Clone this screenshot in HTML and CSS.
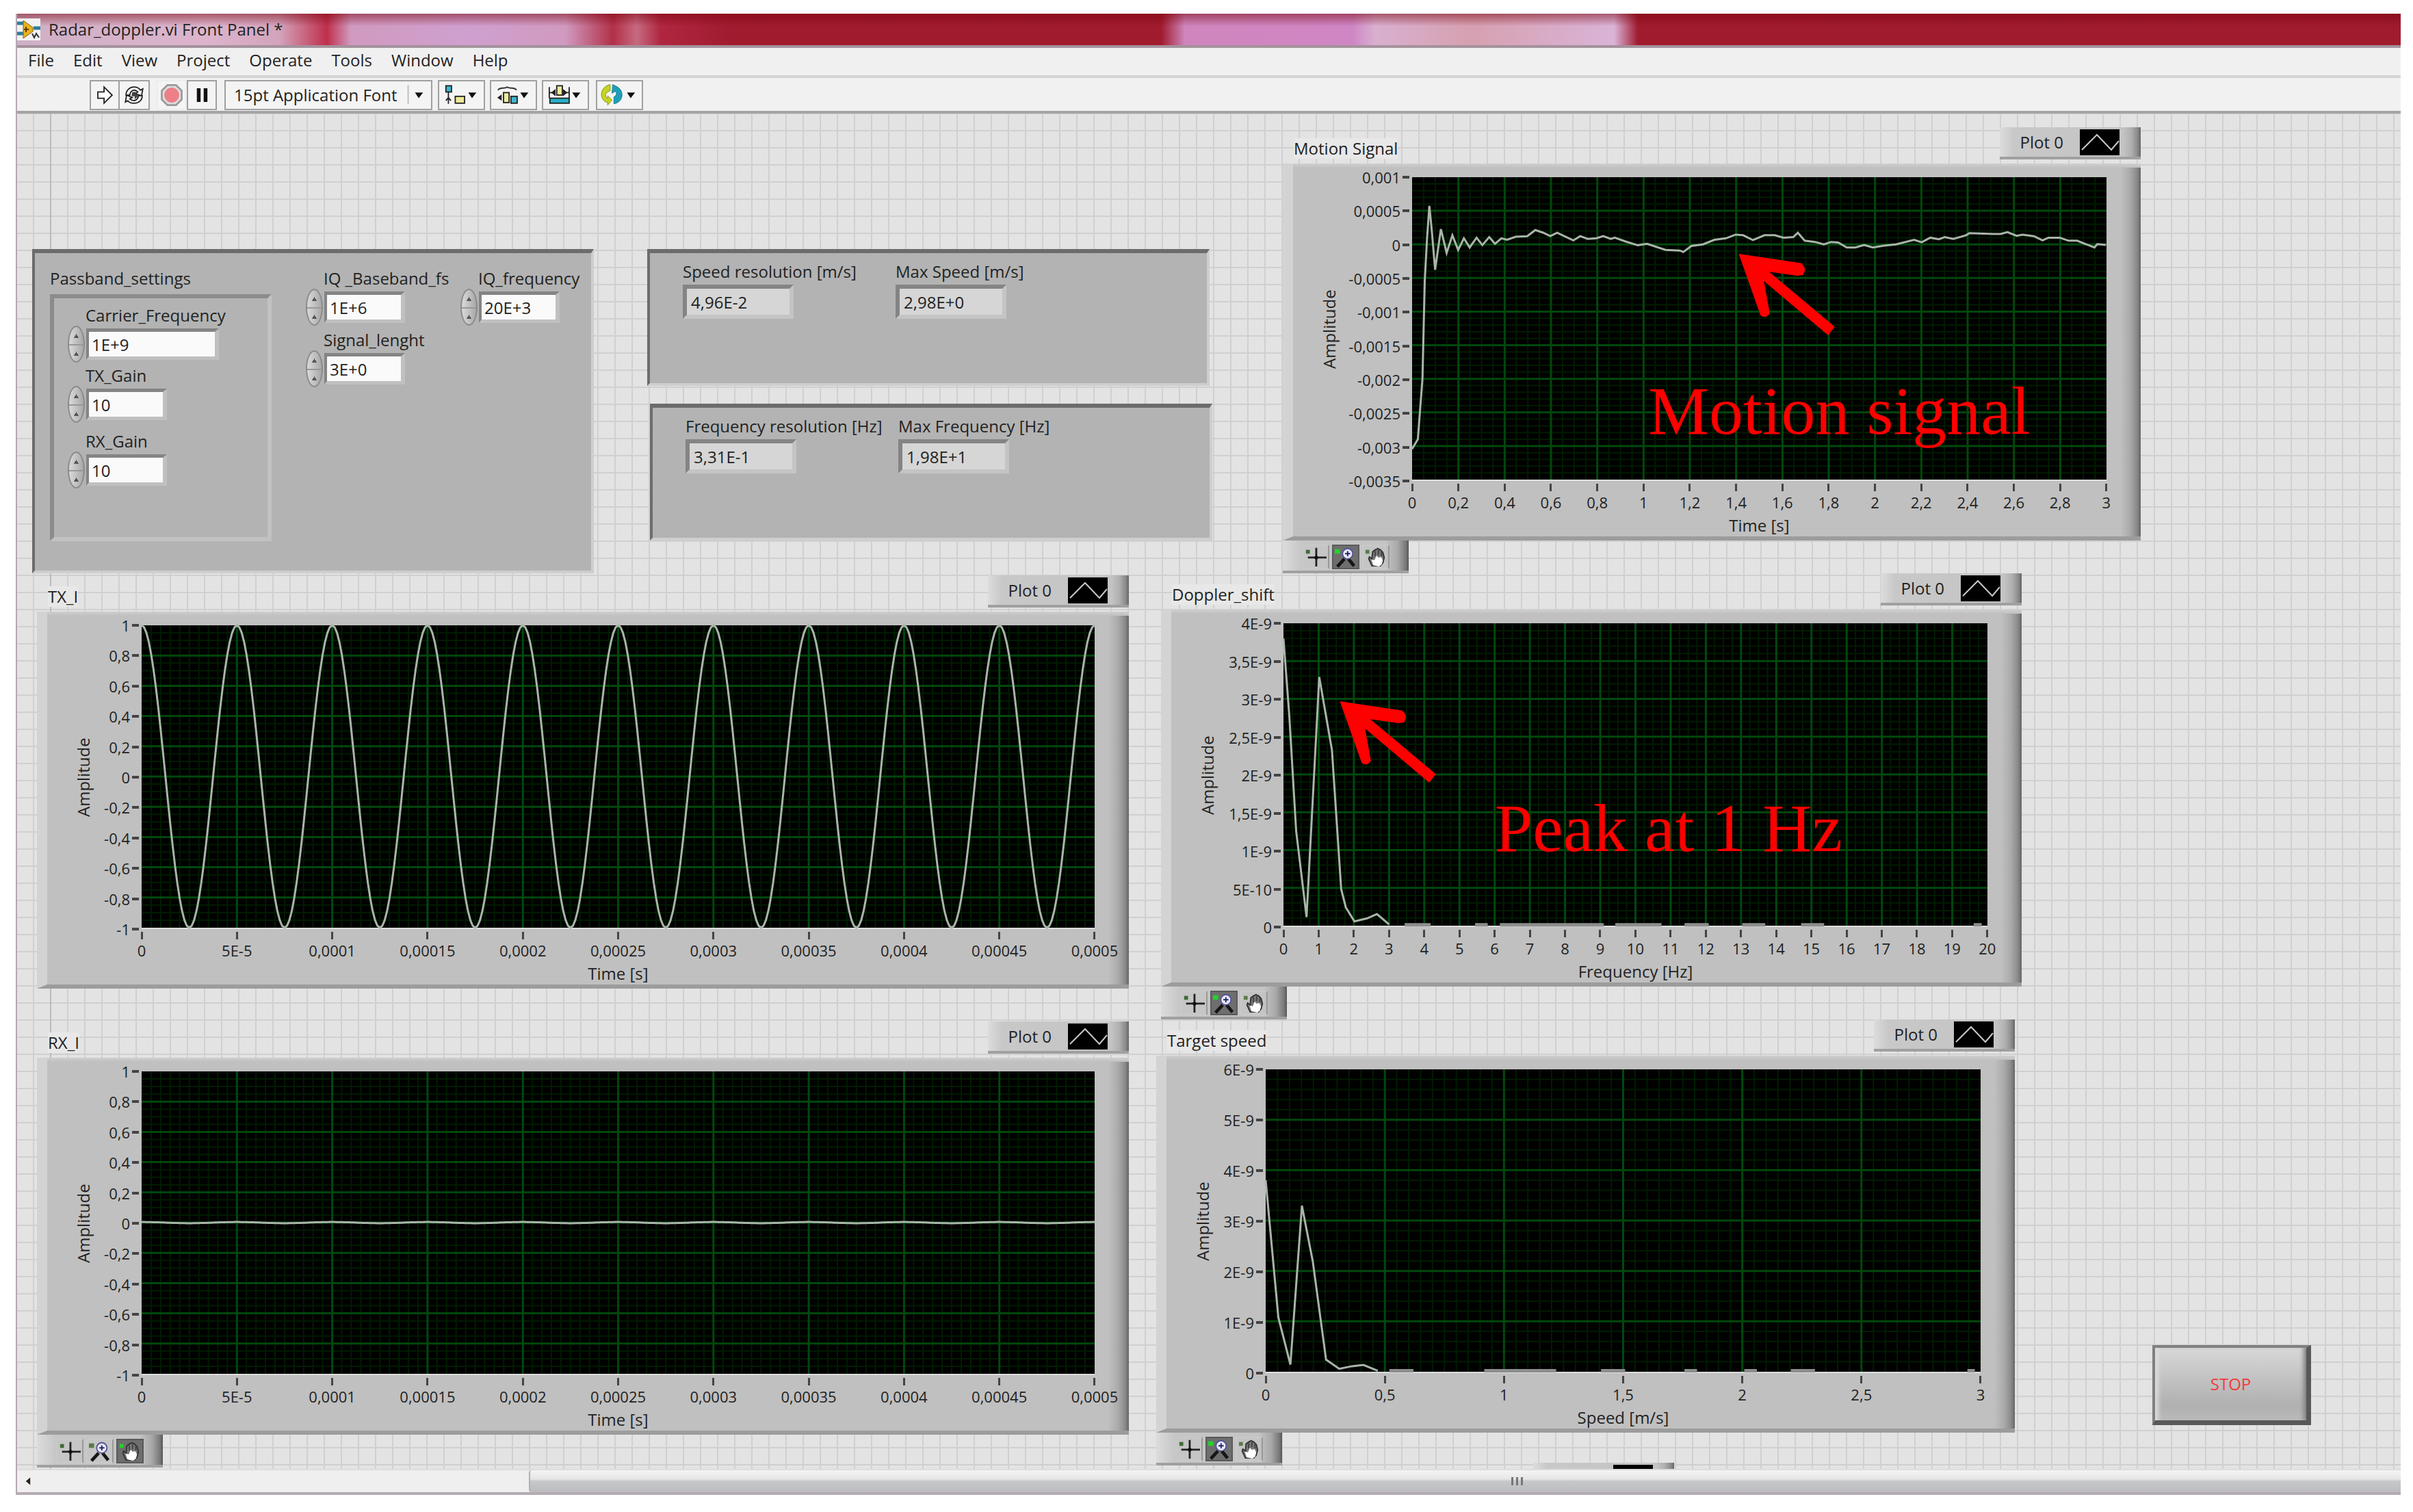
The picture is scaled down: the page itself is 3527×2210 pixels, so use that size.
FILE: index.html
```html
<!DOCTYPE html>
<html lang="en">

<head>
    <meta charset="UTF-8">
    <meta name="viewport" content="width=device-width, initial-scale=1.0">
    <title>Radar_doppler.vi Front Panel *</title>
    <link rel="stylesheet" href="styles.css">
</head>

<body>
    <!-- shared icons -->
    <svg class="symbols" aria-hidden="true">
        <symbol id="icon-cross" viewBox="0 0 38 34">
            <path d="M20 3v29M7 18h29" stroke="#222" stroke-width="3" fill="none" />
            <path d="M16 18l4-4 4 4-4 4z" fill="#111" />
            <rect x="4" y="6" width="6" height="6" fill="#3f6a35" />
        </symbol>
        <symbol id="icon-zoom" viewBox="0 0 38 34">
            <path d="M17 20L6 32M23 20l9 11" stroke="#151515" stroke-width="5" fill="none" />
            <circle cx="22" cy="12" r="8" fill="#e8e8f6" stroke="#55559a" stroke-width="2" />
            <path d="M22 8v8M18 12h8" stroke="#22226a" stroke-width="2" />
            <rect class="led" x="2" y="5" width="8" height="7" />
        </symbol>
        <symbol id="icon-hand" viewBox="0 0 38 34">
            <path d="M13 31L8 20l1-3 4 3 1-11 4-3 4-2 4 2 4 4 2 8-2 8-4 5z" fill="#777" stroke="#333" stroke-width="2" />
            <path d="M15 30l-3-9 5 1 3-7 3 3 4-1 3 5-2 7-4 3z" fill="#fff" />
            <path d="M18 8v8M23 6v8M28 9v7" stroke="#444" stroke-width="2" />
            <rect class="led" x="3" y="6" width="6" height="6" />
        </symbol>
        <symbol id="icon-plot" viewBox="0 0 58 38">
            <rect width="58" height="38" fill="#000" />
            <path d="M3 30L25 8l21 22L57 17" stroke="#c8c8c8" stroke-width="2" fill="none" />
        </symbol>
        <symbol id="icon-arrow" viewBox="0 0 150 124">
            <path d="M0 0L94 14Q104 22 97 32L88 33 46 27 145 110 135 123 38 41 47 90Q41 99 33 93Z" fill="#f00" />
        </symbol>
    </svg>

    <div class="window">
        <header class="title-bar">
            <svg class="app-icon" viewBox="0 0 34 32" aria-hidden="true">
                <rect width="34" height="32" fill="#f2f2f2" />
                <path d="M0 7h11M0 22h9M24 14h10" stroke="#2a7d9c" stroke-width="5" />
                <path d="M9 3l14 10v6L9 29z" fill="#e8b21c" stroke="#8a6508" />
                <path d="M13 12v8M10 16h7" stroke="#5c3c00" stroke-width="2" />
                <path d="M22 22l3 6 3-6 4 6" stroke="#333" stroke-width="2" fill="none" />
            </svg>
            <h1>Radar_doppler.vi Front Panel *</h1>
        </header>

        <nav class="menu-bar">
            <button>File</button>
            <button>Edit</button>
            <button>View</button>
            <button>Project</button>
            <button>Operate</button>
            <button>Tools</button>
            <button>Window</button>
            <button>Help</button>
        </nav>

        <div class="toolbar">
            <div class="tool-group">
                <button class="tool" aria-label="Run">
                    <svg viewBox="0 0 44 44"><path d="M11 17h10V9l13 13-13 13v-8H11z" fill="#fff" stroke="#222" stroke-width="2" /></svg>
                </button>
                <button class="tool" aria-label="Run continuously">
                    <svg viewBox="0 0 44 44">
                        <path d="M9 22c0-8 6-13 13-13 5 0 8 2 10 5l4-2-2 11-10-3 4-3c-6-6-12-2-13 5z" fill="#fff" stroke="#222" stroke-width="2" />
                        <path d="M35 23c0 8-6 12-13 12-5 0-8-1-10-4l-4 2 2-11 9 4-4 2c6 6 13 2 14-5z" fill="#fff" stroke="#222" stroke-width="2" />
                        <path d="M19 17h6v4l4 2-6 6v-5h-5z" fill="#444" />
                    </svg>
                </button>
            </div>
            <button class="tool tool-flat" aria-label="Abort">
                <svg viewBox="0 0 44 44">
                    <path d="M15 6h14l9 9v14l-9 9H15l-9-9V15z" fill="#ddd" stroke="#9a9a9a" stroke-width="3" />
                    <circle cx="22" cy="22" r="12" fill="#ec8086" />
                </svg>
            </button>
            <button class="tool" aria-label="Pause">
                <svg viewBox="0 0 44 44"><path d="M14 11h6v22h-6zM25 11h6v22h-6z" fill="#111" /></svg>
            </button>
            <div class="font-box">
                <select aria-label="Text settings">
                    <option>15pt Application Font</option>
                </select>
                <svg viewBox="0 0 36 44" aria-hidden="true"><path d="M1 6v30" stroke="#bbb" stroke-width="2" /><path d="M12 18h13l-7 9z" fill="#111" /></svg>
            </div>
            <button class="tool tool-wide" aria-label="Align">
                <svg viewBox="0 0 68 44">
                    <path d="M13 16v20M9 31l4-5 4 5" stroke="#222" stroke-width="2" fill="none" />
                    <rect x="9" y="7" width="9" height="10" fill="#39b7cf" stroke="#222" stroke-width="2" />
                    <rect x="24" y="24" width="15" height="11" fill="#eeea9a" stroke="#222" stroke-width="2" />
                    <path d="M45 18h13l-7 9z" fill="#111" />
                </svg>
            </button>
            <button class="tool tool-wide" aria-label="Distribute">
                <svg viewBox="0 0 68 44">
                    <path d="M9 14c4-6 10-1 15-5 5 4 11-1 15 5" stroke="#333" stroke-width="2" fill="none" />
                    <path d="M8 26l7-5v10z" fill="#222" />
                    <rect x="18" y="18" width="9" height="16" fill="#eeea9a" stroke="#222" stroke-width="2" />
                    <rect x="30" y="24" width="10" height="11" fill="#39b7cf" stroke="#222" stroke-width="2" />
                    <path d="M45 18h13l-7 9z" fill="#111" />
                </svg>
            </button>
            <button class="tool tool-wide" aria-label="Resize">
                <svg viewBox="0 0 68 44">
                    <path d="M8 9v18M40 9v18M9 18h9M30 18h9" stroke="#222" stroke-width="2" />
                    <path d="M18 12v12l-7-6zM30 12v12l7-6z" fill="#222" />
                    <rect x="20" y="7" width="9" height="15" fill="#eeea9a" stroke="#222" stroke-width="2" />
                    <rect x="9" y="27" width="31" height="8" fill="#26b0c6" stroke="#222" stroke-width="2" />
                    <path d="M45 18h13l-7 9z" fill="#111" />
                </svg>
            </button>
            <button class="tool tool-wide tool-last" aria-label="Reorder">
                <svg viewBox="0 0 68 44">
                    <path d="M19 5C1 9 1 31 15 34v4l7-8-7-7v4c-5-2-5-9 4-12z" fill="#c6d420" stroke="#80891a" />
                    <path d="M23 5l8 4c12 8 8 25-6 27V25c5-3 5-7 2-9l-5 3z" fill="#1c9fb8" stroke="#14758a" />
                    <path d="M46 18h13l-7 9z" fill="#111" />
                </svg>
            </button>
        </div>

        <main class="panel">
            <div class="row row-top">
                <section class="cluster settings">
                    <div class="passband">
                        <h2>Passband_settings</h2>
                        <div class="cluster-inner">
                            <div class="control">
                                <label for="carrier">Carrier_Frequency</label>
                                <div class="field"><span class="spinner"></span><input id="carrier" class="wide" value="1E+9"></div>
                            </div>
                            <div class="control">
                                <label for="txGain">TX_Gain</label>
                                <div class="field"><span class="spinner"></span><input id="txGain" value="10"></div>
                            </div>
                            <div class="control control-last">
                                <label for="rxGain">RX_Gain</label>
                                <div class="field"><span class="spinner"></span><input id="rxGain" value="10"></div>
                            </div>
                        </div>
                    </div>
                    <div class="iq-column">
                        <div class="control">
                            <label for="basebandFs">IQ _Baseband_fs</label>
                            <div class="field"><span class="spinner"></span><input id="basebandFs" value="1E+6"></div>
                        </div>
                        <div class="control">
                            <label for="signalLength">Signal_lenght</label>
                            <div class="field"><span class="spinner"></span><input id="signalLength" value="3E+0"></div>
                        </div>
                    </div>
                    <div class="iq-column">
                        <div class="control">
                            <label for="iqFrequency">IQ_frequency</label>
                            <div class="field"><span class="spinner"></span><input id="iqFrequency" value="20E+3"></div>
                        </div>
                    </div>
                </section>

                <div class="readouts">
                    <section class="cluster readout">
                        <div class="indicator">
                            <label for="speedRes">Speed resolution [m/s]</label>
                            <input id="speedRes" value="4,96E-2" readonly>
                        </div>
                        <div class="indicator">
                            <label for="maxSpeed">Max Speed [m/s]</label>
                            <input id="maxSpeed" value="2,98E+0" readonly>
                        </div>
                    </section>
                    <section class="cluster readout readout-shifted">
                        <div class="indicator">
                            <label for="freqRes">Frequency resolution [Hz]</label>
                            <input id="freqRes" value="3,31E-1" readonly>
                        </div>
                        <div class="indicator">
                            <label for="maxFreq">Max Frequency [Hz]</label>
                            <input id="maxFreq" value="1,98E+1" readonly>
                        </div>
                    </section>
                </div>

                <section class="graph graph-motion" data-graph="motion"></section>
            </div>

            <div class="row row-middle">
                <section class="graph graph-left" data-graph="tx"></section>
                <section class="graph graph-doppler" data-graph="doppler"></section>
            </div>

            <div class="row row-bottom">
                <section class="graph graph-left" data-graph="rx"></section>
                <section class="graph graph-target" data-graph="target"></section>
                <div class="stop-cell"><button class="stop-btn">STOP</button></div>
            </div>

            <!-- legend of the next graph, cut off by the panel edge -->
            <div class="legend legend-cut"><svg><use href="#icon-plot" /></svg></div>
        </main>

        <footer class="scrollbar">
            <button class="scroll-left" aria-label="Scroll left"><svg viewBox="0 0 10 16"><path d="M9 1v14L1 8z" fill="#222" /></svg></button>
            <div class="scroll-thumb"><span class="grip"></span></div>
        </footer>
    </div>

    <script src="script.js"></script>
</body>

</html>
```
FILE: styles.css
```css
* {
    box-sizing: border-box;
}

body {
    margin: 0;
    padding: 20px 18px 22px 23px;
    background: #fff;
    color: #222;
    font-family: "Open Sans", "Noto Sans", sans-serif;
    font-size: 24px;
    line-height: 30px;
}

h1,
h2 {
    margin: 0;
    font-size: 24px;
    font-weight: 400;
}

button,
input,
select {
    margin: 0;
    padding: 0;
    border: none;
    border-radius: 0;
    background: none;
    color: inherit;
    font: inherit;
}

svg {
    display: block;
}

.symbols {
    position: absolute;
    width: 0;
    height: 0;
}

.window {
    border-left: 2px solid #b5a9b5;
}

/* title bar */
.title-bar {
    display: flex;
    align-items: center;
    gap: 12px;
    height: 50px;
    border-bottom: 4px solid #a3929c;
    background:
        linear-gradient(to bottom, rgba(120, 0, 10, 0.5), rgba(140, 30, 50, 0) 40%),
        linear-gradient(to right, #cfb0c6 0, #dcb4cc 8%, #d3a4bc 11%, #bf2f4c 13%, #d09ac0 14%, #cfa0cf 19%, #d09ac0 23%, #b23048 25%, #c66a80 26%, #b02640 27%, #a01b2e 30%,
            #a01b2e 48%, #cf86bd 49%, #cf86c4 56%, #d9b0d0 57%, #d6a0b0 61%, #dab4d8 67%, #a01b2e 68%, #a01b2e 100%);
}

.app-icon {
    width: 34px;
    height: 32px;
}

/* menu */
.menu-bar {
    display: flex;
    gap: 28px;
    height: 44px;
    padding: 0 0 4px 16px;
    border-bottom: 4px solid #d4d4d4;
    background: #f0f0f0;
}

/* toolbar */
.toolbar {
    display: flex;
    gap: 7px;
    height: 52px;
    padding: 3px 0 0 106px;
    border-bottom: 4px solid #a4a4a4;
    background: #f1f1f1;
}

.tool-group {
    display: flex;
}

.tool {
    width: 44px;
    height: 44px;
    border: 2px solid #a0a0a0;
    background: #f4f4f4;
}

.tool-group .tool + .tool {
    border-left: none;
}

.tool svg {
    width: 100%;
    height: 100%;
}

.tool-flat {
    margin: 0 -7px 0 3px;
    border-color: #ececec;
}

.tool-wide {
    width: 69px;
}

.tool-last {
    margin-left: 3px;
}

.font-box {
    display: flex;
    width: 304px;
    height: 44px;
    margin: 0 1px 0 4px;
    border: 2px solid #a0a0a0;
    background: #f4f4f4;
}

.font-box select {
    flex: 1;
    padding-left: 12px;
    appearance: none;
}

.font-box svg {
    width: 36px;
    height: 40px;
}

/* front panel */
.panel {
    position: relative;
    overflow: hidden;
    padding: 20px 0 2px;
    background:
        linear-gradient(#bbb, #bbb) 48px 0 / 2px 100% no-repeat,
        linear-gradient(to right, #d0d0d0 2px, transparent 2px) -2px 0 / 25px 25px,
        linear-gradient(to bottom, #d0d0d0 2px, transparent 2px) 0 -1px / 25px 25px,
        #e3e3e3;
}

.row {
    display: grid;
}

.row-top {
    grid-template-columns: minmax(0, 821fr) minmax(0, 904fr) minmax(0, 1357fr) minmax(0, 380fr);
    padding-left: 22px;
}

.row-middle {
    grid-template-columns: 1596fr 1305fr 554fr;
    padding-left: 29px;
}

.row-bottom {
    grid-template-columns: 1596fr 1295fr 564fr;
    padding-left: 29px;
}

/* clusters */
.cluster {
    display: flex;
    border: solid;
    border-width: 6px 4px 4px;
    border-color: #6c6c6c #cecece #cecece #6c6c6c;
    background: #b3b3b3;
}

.settings {
    height: 474px;
    margin-top: 178px;
    padding: 22px 0 0 22px;
}

.cluster-inner {
    width: 324px;
    height: 361px;
    margin-top: 8px;
    padding: 10px 0 0 20px;
    border: solid;
    border-width: 6px;
    border-color: #8c8c8c #c2c2c2 #c2c2c2 #8c8c8c;
}

.control {
    display: flex;
    flex-direction: column;
    height: 88px;
}

.control-last {
    margin-top: 8px;
}

.control label {
    padding-left: 26px;
    white-space: nowrap;
}

.field {
    display: flex;
    align-items: center;
}

.spinner {
    width: 25px;
    height: 54px;
    border: 2px solid #8b8b8b;
    border-radius: 50%;
    background:
        conic-gradient(from 150deg at 50% 0, #555 60deg, transparent 0) 50% 36px / 7px 6px no-repeat,
        conic-gradient(from 150deg at 50% 0, #555 60deg, transparent 0) 50% 10px / 7px 6px no-repeat,
        linear-gradient(#999, #999) 0 25px / 100% 2px no-repeat,
        linear-gradient(to right, #dadada, #a8a8a8);
}

.field input {
    width: 118px;
    height: 46px;
    margin-left: 2px;
    padding-left: 4px;
    border: solid;
    border-width: 5px 6px 5px 4px;
    border-color: #848484 #c0c0c0 #c0c0c0 #848484;
    background: #fafafa;
}

.field input.wide {
    width: 194px;
}

.iq-column {
    margin-left: 50px;
}

.iq-column + .iq-column {
    margin-left: 26px;
}

.iq-column .control {
    height: 90px;
    width: 200px;
}

.readouts {
    padding: 178px 0 0 78px;
}

.readout {
    gap: 6px;
    height: 200px;
    margin-right: 4px;
    padding: 12px 0 0 48px;
}

.readout-shifted {
    margin: 26px 0 0 4px;
}

.indicator {
    display: flex;
    flex-direction: column;
    width: 305px;
    white-space: nowrap;
}

.indicator input {
    width: 162px;
    height: 50px;
    margin-top: 4px;
    padding-left: 6px;
    border: solid;
    border-width: 6px;
    border-color: #848484 #c4c4c4 #c4c4c4 #848484;
    background: #d6d6d6;
}

/* graphs */
.graph-motion {
    padding-left: 103px;
}

.graph-left {
    padding-top: 3px;
}

.graph-doppler {
    padding-left: 47px;
}

.graph-target {
    padding-left: 40px;
}

.graph-header {
    display: flex;
    justify-content: space-between;
    height: 53px;
    padding-left: 16px;
}

.graph-header h2 {
    align-self: flex-start;
    margin-top: 16px;
    background: #e8e8e8;
}

.legend {
    display: flex;
    align-items: center;
    justify-content: flex-end;
    gap: 24px;
    width: 206px;
    height: 47px;
    padding-right: 31px;
    border-bottom: 4px solid #a0a0a0;
    background: linear-gradient(to left, #666, #8c8c8c 5px, #b0b0b0 14px, #c4c4c4 26px, #c8c8c8 90%, #dcdcdc);
}

.legend svg {
    width: 58px;
    height: 38px;
}

.legend-cut {
    position: absolute;
    bottom: -38px;
    left: calc(64% - 14px);
}

.graph-frame {
    display: flex;
    height: 551px;
    padding: 20px 50px 0 37px;
    border: solid;
    border-width: 0 0 6px 15px;
    border-color: #d0d0d0 #a0a0a0 #9c9c9c #d3d3d3;
    background:
        linear-gradient(#cfcfcf, #c0c0c0) 0 0 / 100% 6px no-repeat,
        linear-gradient(to left, #666, #8c8c8c 6px, #ababab 16px, #c0c0c0 30px);
}

.y-title {
    width: 32px;
    height: 444px;
    line-height: 32px;
    text-align: center;
    writing-mode: vertical-rl;
    transform: rotate(180deg);
}

.y-scale {
    display: flex;
    flex-direction: column;
    justify-content: space-between;
    width: var(--scale-width);
    height: 444px;
    padding-right: 4px;
}

.y-tick {
    display: flex;
    align-items: center;
    justify-content: flex-end;
    gap: 3px;
    height: 0;
    font-size: 22px;
}

.y-tick::after {
    content: "";
    width: 10px;
    height: 4px;
    background: #444;
}

.plot-column {
    flex: 1;
    min-width: 0;
}

.plot {
    position: relative;
    height: 444px;
    background: #000;
    border-bottom: 2px solid #ddd;
}

.plot-svg {
    width: 100%;
    height: 100%;
    overflow: visible;
}

.plot-svg path,
.plot-svg polyline {
    fill: none;
    vector-effect: non-scaling-stroke;
}

.plot-svg .minor {
    stroke: #001c00;
    stroke-width: 2;
}

.plot-svg .major {
    stroke: #00480c;
    stroke-width: 3;
}

.plot-svg .trace {
    stroke: #a9b5a9;
    stroke-width: 3;
}

.plot-svg .trace-gaps {
    stroke: #8d8d8d;
    stroke-width: 5;
}

.x-scale {
    display: flex;
    justify-content: space-between;
}

.x-tick {
    display: flex;
    flex-direction: column;
    align-items: center;
    gap: 3px;
    width: 0;
    padding-top: 4px;
    font-size: 22px;
    line-height: 26px;
    white-space: nowrap;
}

.x-tick::before {
    content: "";
    width: 3px;
    height: 11px;
    background: #444;
}

.x-title {
    margin-top: 6px;
    text-align: center;
}

/* red remarks over the plots */
.note-arrow {
    position: absolute;
    width: 146px;
    height: 120px;
}

.note {
    position: absolute;
    color: #f00;
    font-family: "Liberation Serif", serif;
    font-size: 100px;
    line-height: 110px;
    white-space: nowrap;
}

.graph-motion .note-arrow {
    left: 47%;
    top: 112px;
}

.graph-motion .note {
    left: 34%;
    top: 287px;
}

.graph-doppler .note-arrow {
    left: 8%;
    top: 114px;
}

.graph-doppler .note {
    left: 30%;
    top: 245px;
}

.palette {
    display: flex;
    align-items: center;
    gap: 4px;
    width: 184px;
    height: 48px;
    padding: 4px 0 0 28px;
    border-bottom: 4px solid #a0a0a0;
    background: linear-gradient(to left, #555, #777 4px, #a8a8a8 16px, #c4c4c4 34px, #c6c6c6 85%, #dcdcdc);
}

.palette button {
    width: 40px;
    height: 36px;
    border: 2px solid #c9c9c9;
    border-right-color: #999;
}

.palette svg {
    width: 100%;
    height: 100%;
    --led: #5c7a4a;
}

.palette .active {
    background: #6e6e6e;
    border-color: #5a5a5a;
}

.palette .active svg {
    --led: #22d32a;
}

.led {
    fill: var(--led);
}

/* stop */
.stop-cell {
    padding: 476px 0 0 201px;
}

.stop-btn {
    width: 232px;
    height: 117px;
    border: solid;
    border-width: 4px 7px 7px 4px;
    border-color: #808080 #585858 #585858 #808080;
    background: linear-gradient(#d8d8d8, #cbcbcb 25%, #b0b0b0 80%, #bababa);
    box-shadow: inset 8px 0 6px -3px #dcdcdc, inset -7px 0 6px -3px #808080;
    color: #f03c3c;
}

/* scrollbar */
.scrollbar {
    display: flex;
    height: 38px;
    border-top: 2px solid #dcdcdc;
    border-bottom: 4px solid #b5abb3;
    background: #efefef;
}

.scroll-left {
    width: 32px;
    padding-left: 12px;
}

.scroll-left svg {
    width: 8px;
    height: 14px;
}

.scroll-thumb {
    display: flex;
    flex: 1;
    align-items: center;
    justify-content: center;
    margin-left: 716px;
    border-left: 2px solid #b0b0b0;
    border-radius: 4px 0 0 4px;
    background: linear-gradient(#f4f4f4, #e6e6e6 40%, #c6c8ca 50%, #bcbcc0);
}

.grip {
    width: 18px;
    height: 12px;
    margin-left: 152px;
    background: repeating-linear-gradient(to right, #777 0 3px, transparent 3px 7px);
}
```
FILE: script.js
```js
// scales and traces of the waveform graphs
const graphs = {
    motion: {
        title: 'Motion Signal',
        xTitle: 'Time [s]',
        yWidth: 105,
        x: ['0', '0,2', '0,4', '0,6', '0,8', '1', '1,2', '1,4', '1,6', '1,8', '2', '2,2', '2,4', '2,6', '2,8', '3'],
        y: ['0,001', '0,0005', '0', '-0,0005', '-0,001', '-0,0015', '-0,002', '-0,0025', '-0,003', '-0,0035'],
        minorX: 4,
        minorY: 5,
        size: [1206, 990],
        points: '0,890 10,858 18,660 22,340 26,200 30,94 34,170 40,303 50,170 60,248 70,190 80,238 90,200 100,230 112,198 122,222 134,196 144,218 155,200 165,205 180,195 200,193 214,173 228,182 240,193 252,182 280,207 292,193 305,202 320,200 332,193 345,202 352,198 370,210 392,223 408,218 440,238 465,240 471,245 485,225 505,220 525,205 545,200 562,188 575,190 592,206 612,190 630,190 645,198 662,196 670,182 682,208 700,212 715,220 728,212 740,214 755,230 770,230 785,222 800,230 820,224 840,220 872,205 885,213 900,198 915,203 925,196 940,202 962,190 968,183 1010,186 1022,186 1034,180 1050,192 1060,188 1080,193 1095,207 1105,198 1125,198 1140,208 1155,208 1185,230 1190,219 1205,222',
        note: 'Motion signal',
        active: 'zoom'
    },
    tx: {
        title: 'TX_I',
        xTitle: 'Time [s]',
        yWidth: 69,
        x: ['0', '5E-5', '0,0001', '0,00015', '0,0002', '0,00025', '0,0003', '0,00035', '0,0004', '0,00045', '0,0005'],
        y: ['1', '0,8', '0,6', '0,4', '0,2', '0', '-0,2', '-0,4', '-0,6', '-0,8', '-1'],
        minorX: 10,
        minorY: 4,
        size: [1000, 1000],
        points: wave(500, 10)
    },
    rx: {
        title: 'RX_I',
        xTitle: 'Time [s]',
        yWidth: 69,
        x: ['0', '5E-5', '0,0001', '0,00015', '0,0002', '0,00025', '0,0003', '0,00035', '0,0004', '0,00045', '0,0005'],
        y: ['1', '0,8', '0,6', '0,4', '0,2', '0', '-0,2', '-0,4', '-0,6', '-0,8', '-1'],
        minorX: 10,
        minorY: 4,
        size: [1000, 1000],
        points: wave(2, 10),
        active: 'hand'
    },
    doppler: {
        title: 'Doppler_shift',
        xTitle: 'Frequency [Hz]',
        yWidth: 95,
        x: Array.from({ length: 21 }, (_, i) => String(i)),
        y: ['4E-9', '3,5E-9', '3E-9', '2,5E-9', '2E-9', '1,5E-9', '1E-9', '5E-10', '0'],
        minorX: 4,
        minorY: 5,
        size: [1220, 990],
        points: '0,50 10,300 22,680 40,962 62,176 84,415 100,870 108,930 123,976 145,966 162,952 183,986',
        base: [[210, 255], [332, 354], [375, 555], [575, 655], [695, 737], [795, 835], [897, 937], [1196, 1210]],
        note: 'Peak at 1 Hz',
        active: 'zoom'
    },
    target: {
        title: 'Target speed',
        xTitle: 'Speed [m/s]',
        yWidth: 76,
        x: ['0', '0,5', '1', '1,5', '2', '2,5', '3'],
        y: ['6E-9', '5E-9', '4E-9', '3E-9', '2E-9', '1E-9', '0'],
        minorX: 10,
        minorY: 5,
        size: [1243, 927],
        points: '0,340 22,760 43,905 63,418 82,590 105,890 128,918 150,910 170,906 195,924',
        base: [[215, 257], [380, 505], [583, 625], [728, 750], [832, 854], [913, 955], [1220, 1233]],
        active: 'zoom'
    }
};

function wave(amplitude, periods) {
    const points = [];
    for (let i = 0; i <= 400; i++) {
        const y = 500 - amplitude * Math.cos(2 * Math.PI * periods * i / 400);
        points.push(`${i * 2.5},${y.toFixed(1)}`);
    }
    return points.join(' ');
}

// evenly spaced grid lines
function gridPath(w, h, nx, ny) {
    let d = '';
    for (let i = 1; i < nx; i++) d += `M${(w * i / nx).toFixed(2)} 0V${h}`;
    for (let i = 1; i < ny; i++) d += `M0 ${(h * i / ny).toFixed(2)}H${w}`;
    return d;
}

function palette(active) {
    return `<div class="palette">${['cross', 'zoom', 'hand'].map(name => `
        <button class="${name === active ? 'active' : ''}" aria-label="${name}"><svg><use href="#icon-${name}"/></svg></button>`).join('')}
    </div>`;
}

function renderGraph(g) {
    const [w, h] = g.size;
    const nx = g.x.length - 1;
    const ny = g.y.length - 1;
    const base = (g.base || []).map(([a, b]) => `M${a} ${h - 3}H${b}`).join('');

    return `
        <div class="graph-header">
            <h2>${g.title}</h2>
            <div class="legend"><span>Plot 0</span><svg><use href="#icon-plot"/></svg></div>
        </div>
        <div class="graph-frame">
            <div class="y-title">Amplitude</div>
            <div class="y-scale" style="--scale-width: ${g.yWidth}px">
                ${g.y.map(t => `<div class="y-tick">${t}</div>`).join('')}
            </div>
            <div class="plot-column">
                <div class="plot">
                    <svg class="plot-svg" viewBox="0 0 ${w} ${h}" preserveAspectRatio="none">
                        <path class="minor" d="${gridPath(w, h, nx * g.minorX, ny * g.minorY)}"/>
                        <path class="major" d="${gridPath(w, h, nx, ny)}"/>
                        <polyline class="trace" points="${g.points}"/>
                        <path class="trace-gaps" d="${base}"/>
                    </svg>
                    ${g.note ? `<svg class="note-arrow"><use href="#icon-arrow"/></svg><span class="note">${g.note}</span>` : ''}
                </div>
                <div class="x-scale">
                    ${g.x.map(t => `<div class="x-tick">${t}</div>`).join('')}
                </div>
                <div class="x-title">${g.xTitle}</div>
            </div>
        </div>
        ${g.active ? palette(g.active) : ''}`;
}

document.querySelectorAll('[data-graph]').forEach(el => {
    el.innerHTML = renderGraph(graphs[el.dataset.graph]);
});
```
